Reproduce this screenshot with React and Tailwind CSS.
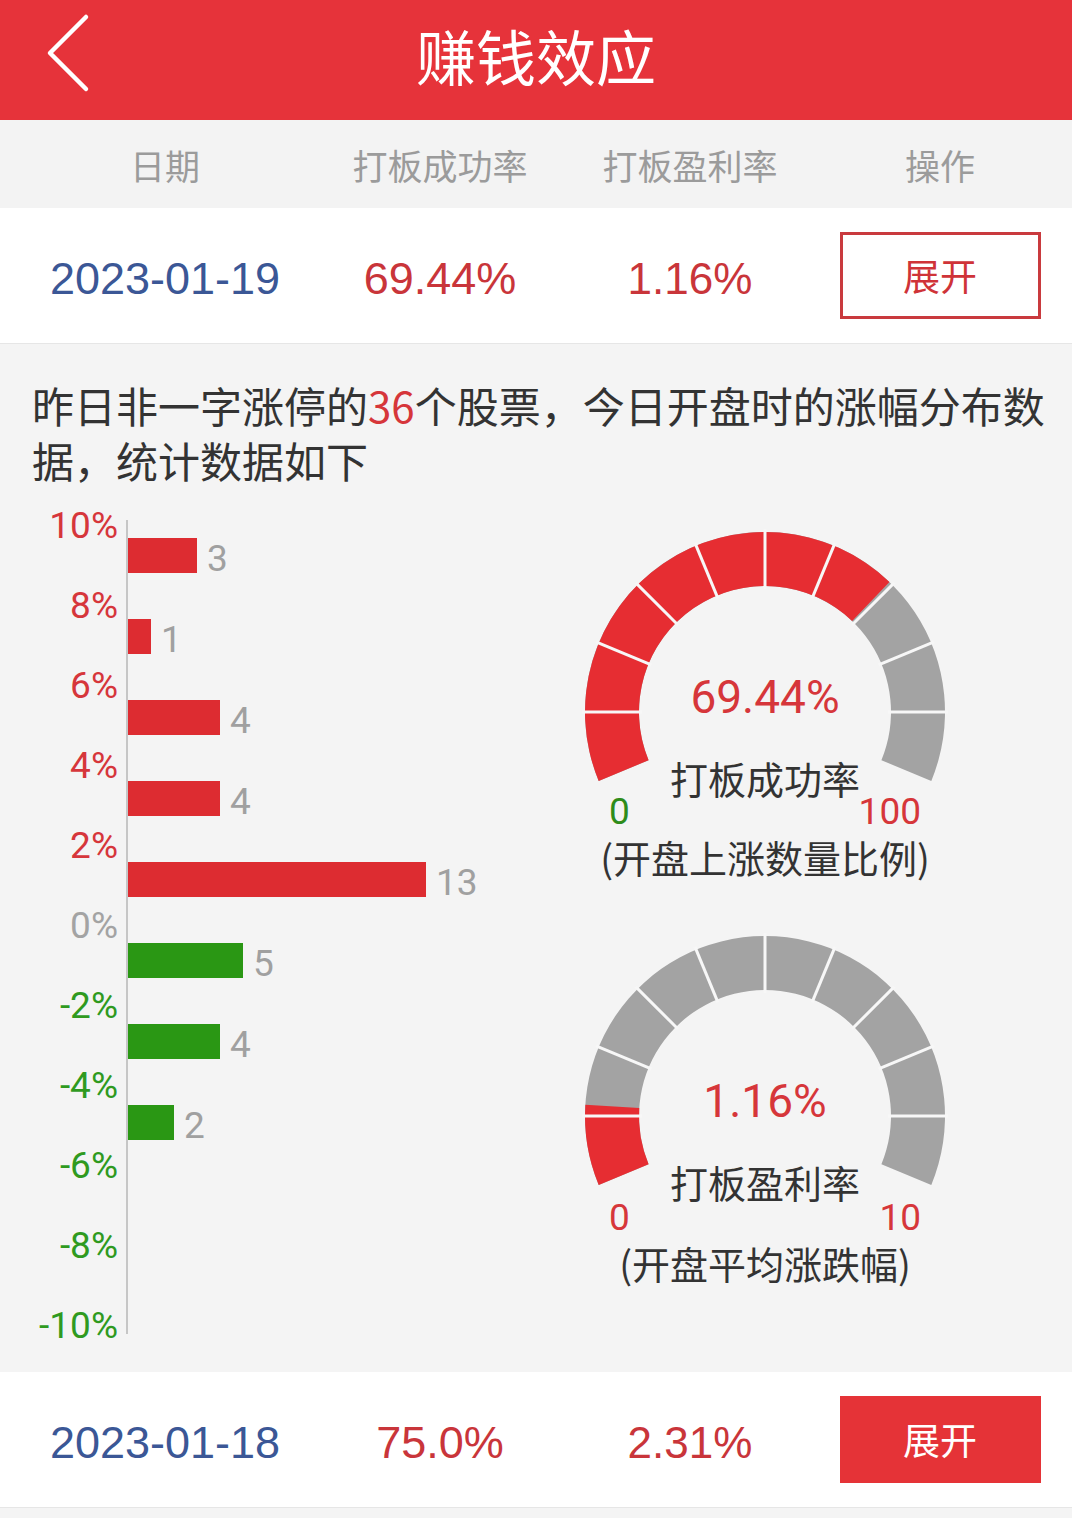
import React from "react";

const CJK = "font-['Noto_Sans_CJK_SC',sans-serif]";
const NUM = "font-['Liberation_Sans','Noto_Sans_CJK_SC',sans-serif]";
const RB = "font-['Roboto','Noto_Sans_CJK_SC',sans-serif]";

function BackIcon() {
  return (
    <svg width="48" height="80" viewBox="0 0 48 80" className="block">
      <polyline points="42,4 6,40 42,76" fill="none" stroke="#ffffff" strokeWidth="4.5" strokeLinecap="round" strokeLinejoin="round" />
    </svg>
  );
}

function Row({ date, rate, profit, filled }) {
  return (
    <div className="flex h-[136px] items-center bg-white border-b border-[#e6e6e6]">
      <div className={`w-[330px] text-center text-[45px] mt-[7px] text-[#3b5796] ${NUM}`}>{date}</div>
      <div className={`w-[220px] text-center text-[45px] mt-[7px] text-[#c9353a] ${NUM}`}>{rate}</div>
      <div className={`w-[280px] text-center text-[44px] mt-[7px] text-[#c9353a] ${NUM}`}>{profit}</div>
      <div className="w-[220px] flex justify-center">
        {filled ? (
          <div className={`w-[201px] h-[87px] bg-[#e53337] text-white text-[37px] flex items-center justify-center ${CJK}`}>展开</div>
        ) : (
          <div className={`w-[201px] h-[87px] border-[3px] border-[#c93a3e] text-[#cf3338] text-[37px] flex items-center justify-center ${CJK}`}>展开</div>
        )}
      </div>
    </div>
  );
}

const labels = [
  { t: "10%", c: "text-[#d6363b]" },
  { t: "8%", c: "text-[#d6363b]" },
  { t: "6%", c: "text-[#d6363b]" },
  { t: "4%", c: "text-[#d6363b]" },
  { t: "2%", c: "text-[#d6363b]" },
  { t: "0%", c: "text-[#a3a3a3]" },
  { t: "-2%", c: "text-[#2f9a1f]" },
  { t: "-4%", c: "text-[#2f9a1f]" },
  { t: "-6%", c: "text-[#2f9a1f]" },
  { t: "-8%", c: "text-[#2f9a1f]" },
  { t: "-10%", c: "text-[#2f9a1f]" },
];

const bars = [
  { n: 3, red: true },
  { n: 1, red: true },
  { n: 4, red: true },
  { n: 4, red: true },
  { n: 13, red: true },
  { n: 5, red: false },
  { n: 4, red: false },
  { n: 2, red: false },
];

function BarChart() {
  return (
    <div className="flex w-[575px]">
      <div className={`w-[118px] pt-[18px] flex flex-col gap-[44px] ${RB}`}>
        {labels.map((l) => (
          <div key={l.t} className={`h-[36px] leading-[36px] text-right text-[37px] ${l.c}`}>{l.t}</div>
        ))}
      </div>
      <div className="ml-[8px] mt-[30px] w-[2px] h-[814px] bg-[#c6c6c6]" />
      <div className="pt-[48px] flex flex-col gap-[46px]">
        {bars.map((b, i) => (
          <div key={i} className="h-[35px] flex items-center">
            <div
              className={`h-[35px] ${b.red ? "bg-[#dd2c31]" : "bg-[#2a9714]"}`}
              style={{ width: Math.round(b.n * 22.9) + "px" }}
            />
            <div className={`ml-[10px] mt-[7px] text-[37px] leading-[36px] text-[#a0a0a0] ${RB}`}>{b.n}</div>
          </div>
        ))}
      </div>
    </div>
  );
}

function Gauge({ frac, value, label, maxLabel, sub, zeroClass, zeroMt }) {
  const cx = 190, cy = 190, R = 180, r = 126;
  const p = (rad, deg) => [cx + rad * Math.cos((deg * Math.PI) / 180), cy - rad * Math.sin((deg * Math.PI) / 180)];
  const sector = (s, e) => {
    const [x1, y1] = p(R, s);
    const [x2, y2] = p(R, e);
    const [x3, y3] = p(r, e);
    const [x4, y4] = p(r, s);
    const large = s - e > 180 ? 1 : 0;
    return `M${x1} ${y1} A${R} ${R} 0 ${large} 1 ${x2} ${y2} L${x3} ${y3} A${r} ${r} 0 ${large} 0 ${x4} ${y4} Z`;
  };
  const start = 202.5, end = -22.5;
  const redEnd = start - 225 * frac;
  const seps = [];
  for (let k = 1; k <= 9; k++) {
    const a = start - 22.5 * k;
    const [xa, ya] = p(r - 3, a);
    const [xb, yb] = p(R + 3, a);
    seps.push(<line key={k} x1={xa} y1={ya} x2={xb} y2={yb} stroke="#f7f7f7" strokeWidth="3" />);
  }
  return (
    <div className="relative w-[380px]">
      <svg width="380" height="262" viewBox="0 0 380 262" className="block">
        <path d={sector(start, end)} fill="#a3a3a3" />
        <path d={sector(start, redEnd)} fill="#e62d32" />
        {seps}
      </svg>
      <div className={`absolute left-0 right-0 top-[148px] text-center text-[46px] leading-[54px] text-[#d6363a] ${RB}`}>{value}</div>
      <div className={`-mt-[29px] text-center text-[38px] leading-[46px] text-[#333333] ${CJK}`}>{label}</div>
      <div className={`flex justify-between px-[34px] text-[37px] leading-[40px] ${RB}`} style={{ marginTop: zeroMt + "px" }}>
        <span className={zeroClass}>0</span>
        <span className="text-[#d6363a]">{maxLabel}</span>
      </div>
      <div className={`mt-[2px] text-center text-[38px] leading-[46px] text-[#333333] ${CJK}`}>{sub}</div>
    </div>
  );
}

export default function App() {
  return (
    <div className="w-[1072px] min-h-[1518px] bg-[#f4f4f4]">
      <div className="relative h-[120px] bg-[#e6333a] flex items-center justify-center">
        <div className="absolute left-[44px] top-[13px]">
          <BackIcon />
        </div>
        <div className={`text-white text-[60px] leading-[70px] -mt-[10px] ${CJK}`}>赚钱效应</div>
      </div>
      <div className={`flex h-[88px] items-center bg-[#f3f3f3] text-[35px] text-[#9b9b9b] ${CJK}`}>
        <div className="w-[330px] text-center mt-[2px]">日期</div>
        <div className="w-[220px] text-center mt-[2px]">打板成功率</div>
        <div className="w-[280px] text-center mt-[2px]">打板盈利率</div>
        <div className="w-[220px] text-center mt-[2px]">操作</div>
      </div>
      <Row date="2023-01-19" rate="69.44%" profit="1.16%" filled={false} />
      <div className="bg-[#f4f4f4] pt-[33px] pb-[28px]">
        <div className={`pl-[32px] text-[42px] leading-[55px] text-[#333333] ${CJK}`}>
          <div className="whitespace-nowrap">
            昨日非一字涨停的<span className="text-[#d6363a]">36</span>个股票，今日开盘时的涨幅分布数
          </div>
          <div className="whitespace-nowrap">据，统计数据如下</div>
        </div>
        <div className="flex mt-[3px]">
          <BarChart />
          <div className="w-[380px] pt-[32px] flex flex-col gap-[46px]">
            <Gauge
              frac={0.6944}
              value="69.44%"
              label="打板成功率"
              maxLabel="100"
              sub="(开盘上涨数量比例)"
              zeroClass="text-[#2e8c1a]"
              zeroMt={-9}
            />
            <Gauge
              frac={0.116}
              value="1.16%"
              label="打板盈利率"
              maxLabel="10"
              sub="(开盘平均涨跌幅)"
              zeroClass="text-[#d6363a]"
              zeroMt={-7}
            />
          </div>
        </div>
      </div>
      <Row date="2023-01-18" rate="75.0%" profit="2.31%" filled={true} />
    </div>
  );
}
